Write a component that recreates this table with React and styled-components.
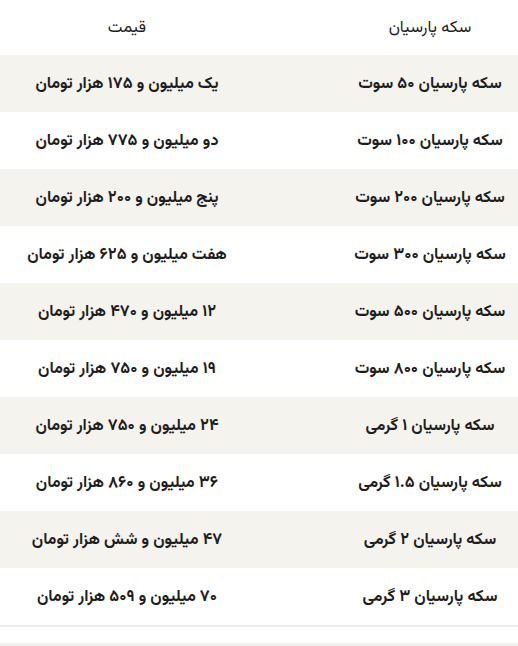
import React from "react";
import styled, { createGlobalStyle } from "styled-components";

const Global = createGlobalStyle`
  html, body { margin: 0; padding: 0; background: #ffffff; }
  body { font-family: "Vazirmatn", "DejaVu Sans", "Noto Sans", sans-serif; }
`;

const Table = styled.div`
  direction: rtl;
  width: 518px;
  display: flex;
  flex-direction: column;
  color: #1e1e1e;
  border-bottom: 2px solid #eeedea;
`;

const Row = styled.div`
  display: flex;
  justify-content: space-between;
  align-items: center;
  height: ${(p) => (p.$head ? 55 : 57)}px;
  background: ${(p) => (p.$shade ? "#f5f3ee" : "#ffffff")};
`;

const NameCell = styled.div`
  flex: 0 0 176px;
  text-align: center;
  font-size: ${(p) => (p.$head ? 16.5 : 16.3)}px;
  font-weight: ${(p) => (p.$head ? 400 : 700)};
  white-space: nowrap;
`;

const PriceCell = styled.div`
  flex: 0 0 254px;
  text-align: center;
  font-size: ${(p) => (p.$head ? 16.5 : 16.3)}px;
  font-weight: ${(p) => (p.$head ? 400 : 700)};
  white-space: nowrap;
`;

const Footer = styled.div`
  height: 16px;
  border-bottom: 3px solid #f0efec;
`;

const rows = [
  ["سکه پارسیان ۵۰ سوت", "یک میلیون و ۱۷۵ هزار تومان"],
  ["سکه پارسیان ۱۰۰ سوت", "دو میلیون و ۷۷۵ هزار تومان"],
  ["سکه پارسیان ۲۰۰ سوت", "پنج میلیون و ۲۰۰ هزار تومان"],
  ["سکه پارسیان ۳۰۰ سوت", "هفت میلیون و ۶۲۵ هزار تومان"],
  ["سکه پارسیان ۵۰۰ سوت", "۱۲ میلیون و ۴۷۰ هزار تومان"],
  ["سکه پارسیان ۸۰۰ سوت", "۱۹ میلیون و ۷۵۰ هزار تومان"],
  ["سکه پارسیان ۱ گرمی", "۲۴ میلیون و ۷۵۰ هزار تومان"],
  ["سکه پارسیان ۱.۵ گرمی", "۳۶ میلیون و ۸۶۰ هزار تومان"],
  ["سکه پارسیان ۲ گرمی", "۴۷ میلیون و شش هزار تومان"],
  ["سکه پارسیان ۳ گرمی", "۷۰ میلیون و ۵۰۹ هزار تومان"],
];

export default function App() {
  return (
    <>
      <Global />
      <Table>
        <Row $head>
          <NameCell $head>سکه پارسیان</NameCell>
          <PriceCell $head>قیمت</PriceCell>
        </Row>
        {rows.map(([name, price], i) => (
          <Row key={i} $shade={i % 2 === 0}>
            <NameCell>{name}</NameCell>
            <PriceCell>{price}</PriceCell>
          </Row>
        ))}
      </Table>
      <Footer />
    </>
  );
}
